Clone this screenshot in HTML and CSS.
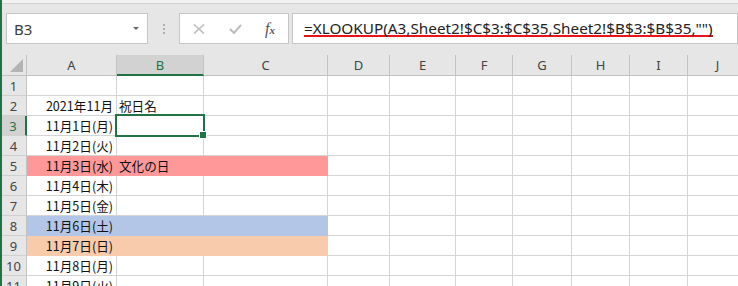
FILE: index.html
```html
<!DOCTYPE html>
<html lang="ja">
<head>
  <meta charset="UTF-8">
  <title>XLOOKUP 祝日名</title>
  <link rel="stylesheet" href="styles.css">
</head>
<body>
  <div class="app">
    <div class="ribbon-edge"></div>

    <div class="formula-bar">
      <div class="name-box">
        <span class="name-text">B3</span>
        <span class="name-arrow"></span>
      </div>
      <div class="grip"><i></i><i></i><i></i></div>
      <div class="fx-buttons">
        <svg class="fx-icon" width="12" height="10" viewBox="0 0 12 10">
          <path d="M1 0.5 L11 9.5 M11 0.5 L1 9.5" stroke="#bdbdbd" stroke-width="1.6" fill="none"/>
        </svg>
        <svg class="fx-icon" width="13" height="10" viewBox="0 0 13 10">
          <path d="M1 5 L5 9 L12 1" stroke="#bdbdbd" stroke-width="2" fill="none"/>
        </svg>
        <span class="fx-label">f<small>x</small></span>
      </div>
      <div class="formula-box">
        <span class="formula-text">=XLOOKUP(A3,Sheet2!$C$3:$C$35,Sheet2!$B$3:$B$35,"")</span>
      </div>
    </div>

    <div class="sheet">
      <div class="corner"><span class="corner-tri"></span></div>
      <div class="col-head">A</div>
      <div class="col-head active">B</div>
      <div class="col-head">C</div>
      <div class="col-head">D</div>
      <div class="col-head">E</div>
      <div class="col-head">F</div>
      <div class="col-head">G</div>
      <div class="col-head">H</div>
      <div class="col-head">I</div>
      <div class="col-head">J</div>

      <div class="row-head">1</div>
      <div class="cell"></div><div class="cell"></div><div class="cell"></div><div class="cell"></div><div class="cell"></div><div class="cell"></div><div class="cell"></div><div class="cell"></div><div class="cell"></div><div class="cell"></div>

      <div class="row-head">2</div>
      <div class="cell num">2021年11月</div><div class="cell">祝日名</div><div class="cell"></div><div class="cell"></div><div class="cell"></div><div class="cell"></div><div class="cell"></div><div class="cell"></div><div class="cell"></div><div class="cell"></div>

      <div class="row-head active">3</div>
      <div class="cell num">11月1日(月)</div><div class="cell selected"></div><div class="cell"></div><div class="cell"></div><div class="cell"></div><div class="cell"></div><div class="cell"></div><div class="cell"></div><div class="cell"></div><div class="cell"></div>

      <div class="row-head">4</div>
      <div class="cell num">11月2日(火)</div><div class="cell"></div><div class="cell"></div><div class="cell"></div><div class="cell"></div><div class="cell"></div><div class="cell"></div><div class="cell"></div><div class="cell"></div><div class="cell"></div>

      <div class="row-head">5</div>
      <div class="cell num holiday">11月3日(水)</div><div class="cell holiday">文化の日</div><div class="cell holiday"></div><div class="cell"></div><div class="cell"></div><div class="cell"></div><div class="cell"></div><div class="cell"></div><div class="cell"></div><div class="cell"></div>

      <div class="row-head">6</div>
      <div class="cell num">11月4日(木)</div><div class="cell"></div><div class="cell"></div><div class="cell"></div><div class="cell"></div><div class="cell"></div><div class="cell"></div><div class="cell"></div><div class="cell"></div><div class="cell"></div>

      <div class="row-head">7</div>
      <div class="cell num">11月5日(金)</div><div class="cell"></div><div class="cell"></div><div class="cell"></div><div class="cell"></div><div class="cell"></div><div class="cell"></div><div class="cell"></div><div class="cell"></div><div class="cell"></div>

      <div class="row-head">8</div>
      <div class="cell num saturday">11月6日(土)</div><div class="cell saturday"></div><div class="cell saturday"></div><div class="cell"></div><div class="cell"></div><div class="cell"></div><div class="cell"></div><div class="cell"></div><div class="cell"></div><div class="cell"></div>

      <div class="row-head">9</div>
      <div class="cell num sunday">11月7日(日)</div><div class="cell sunday"></div><div class="cell sunday"></div><div class="cell"></div><div class="cell"></div><div class="cell"></div><div class="cell"></div><div class="cell"></div><div class="cell"></div><div class="cell"></div>

      <div class="row-head">10</div>
      <div class="cell num">11月8日(月)</div><div class="cell"></div><div class="cell"></div><div class="cell"></div><div class="cell"></div><div class="cell"></div><div class="cell"></div><div class="cell"></div><div class="cell"></div><div class="cell"></div>

      <div class="row-head">11</div>
      <div class="cell num">11月9日(火)</div><div class="cell"></div><div class="cell"></div><div class="cell"></div><div class="cell"></div><div class="cell"></div><div class="cell"></div><div class="cell"></div><div class="cell"></div><div class="cell"></div>
    </div>
  </div>
</body>
</html>
```

FILE: styles.css
```css
* {
  margin: 0;
  padding: 0;
  box-sizing: border-box;
}

body {
  width: 738px;
  height: 286px;
  overflow: hidden;
  background: #e6e6e6;
  font-family: "Noto Sans", "Noto Sans CJK JP", sans-serif;
  color: #1f1f1f;
}

.app {
  border-left: 2px solid #217346;
  height: 286px;
  overflow: hidden;
}

.ribbon-edge {
  height: 4px;
  background: #f1f1f1;
  border-bottom: 1px solid #d3d3d3;
}

/* formula bar */
.formula-bar {
  display: flex;
  align-items: stretch;
  height: 51px;
  padding: 9px 0 11px 4px;
}

.name-box {
  width: 142px;
  background: #fff;
  border: 1px solid #c6c6c6;
  display: flex;
  align-items: center;
  justify-content: space-between;
  padding: 0 7px 0 7px;
}

.name-text {
  font-size: 15px;
  color: #3b3b3b;
}

.name-arrow {
  width: 0;
  height: 0;
  border-left: 3px solid transparent;
  border-right: 3px solid transparent;
  border-top: 3px solid #666;
  margin-right: 1px;
}

.grip {
  width: 31px;
  display: flex;
  flex-direction: column;
  align-items: center;
  justify-content: center;
  gap: 2px;
}

.grip i {
  width: 2px;
  height: 2px;
  background: #b0b0b0;
}

.fx-buttons {
  width: 110px;
  background: #fff;
  border: 1px solid #c6c6c6;
  display: flex;
  align-items: center;
  padding-left: 13px;
  gap: 24px;
}

.fx-icon {
  flex: none;
}

.fx-label {
  font-family: "Liberation Serif", serif;
  font-style: italic;
  font-size: 16px;
  color: #555;
  margin-left: -1px;
}

.fx-label small {
  font-size: 11px;
  font-weight: bold;
}

.formula-box {
  flex: 1;
  margin-left: 3px;
  background: #fff;
  border: 1px solid #c6c6c6;
  display: flex;
  align-items: center;
  padding-left: 11px;
}

.formula-text {
  font-family: "Noto Sans", sans-serif;
  font-size: 15.3px;
  line-height: 14px;
  color: #222;
  border-bottom: 2px solid #e8131b;
}

/* grid */
.sheet {
  display: grid;
  grid-template-columns: 25px 90px 87px 124px 62px 66px 57px 59px 58px 58px 60px;
  grid-template-rows: 21px;
  grid-auto-rows: 20px;
  background: #fff;
}

.corner,
.col-head,
.row-head {
  background: #e6e6e6;
  color: #444;
  font-size: 13px;
  display: flex;
  align-items: center;
  justify-content: center;
  border-right: 1px solid #c3c3c3;
  border-bottom: 1px solid #c3c3c3;
}

.corner {
  justify-content: flex-end;
  align-items: flex-end;
  padding: 0 3px 3px 0;
}

.corner-tri {
  width: 0;
  height: 0;
  border-left: 13px solid transparent;
  border-bottom: 13px solid #b4b4b4;
}

.col-head.active {
  background: #d2d2d2;
  color: #217346;
  border-bottom: 2px solid #217346;
}

.row-head {
  border-bottom-color: #d0d0d0;
  padding-right: 1px;
}

.row-head.active {
  background: #d2d2d2;
  color: #217346;
  border-right: 2px solid #217346;
}

.cell {
  border-right: 1px solid #d4d4d4;
  border-bottom: 1px solid #d4d4d4;
  font-family: "Noto Sans CJK JP", sans-serif;
  font-size: 12.6px;
  line-height: 19px;
  padding: 0 2px;
  white-space: nowrap;
  color: #111;
}

.cell.num {
  text-align: right;
  padding-right: 3px;
}

.cell.holiday {
  background: #ff9999;
  border-color: #ff9999;
}

.cell.saturday {
  background: #b4c6e7;
  border-color: #b4c6e7;
}

.cell.sunday {
  background: #f8cbad;
  border-color: #f8cbad;
}

.cell.selected {
  position: relative;
}

.cell.selected::before {
  content: "";
  position: absolute;
  left: -2px;
  top: -2px;
  right: -2px;
  bottom: -2px;
  border: 2px solid #217346;
}

.cell.selected::after {
  content: "";
  position: absolute;
  right: -4px;
  bottom: -4px;
  width: 6px;
  height: 6px;
  background: #217346;
  border: 1px solid #fff;
}
```
